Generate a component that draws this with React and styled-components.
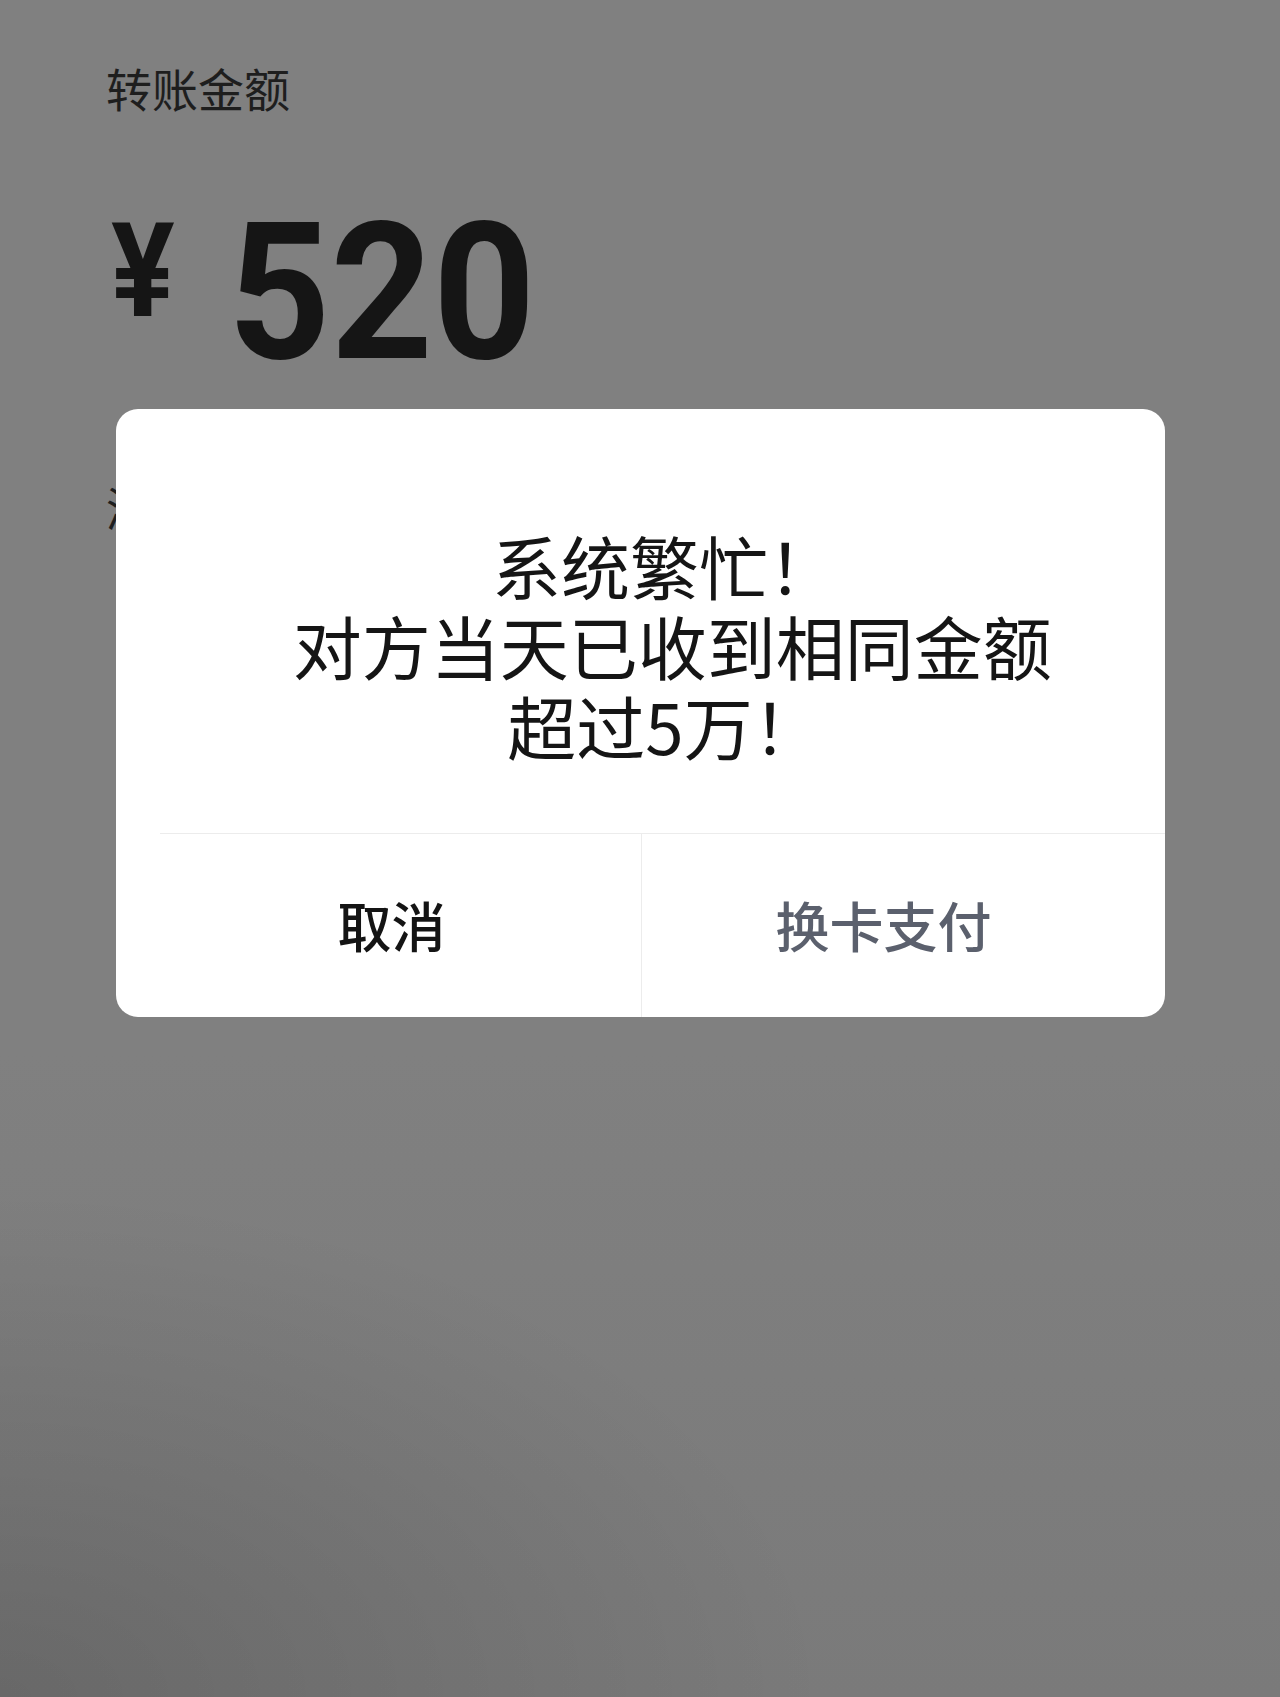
import React from 'react';
import styled, { createGlobalStyle } from 'styled-components';

const GlobalStyle = createGlobalStyle`
  html, body {
    margin: 0;
    padding: 0;
  }
  body {
    font-family: "Noto Sans CJK SC", "Noto Sans", sans-serif;
  }
`

const App = () => {
  return (
    <Page>
      <GlobalStyle />
      <Content>
        <Label>转账金额</Label>
        <AmountRow>
          <Yen>¥</Yen>
          <Digits>520</Digits>
        </AmountRow>
        <Note>添加转账说明</Note>
      </Content>

      <Dialog>
        <Message>
          <Line>系统繁忙！</Line>
          <Line> 对方当天已收到相同金额</Line>
          <Line>超过5万！</Line>
        </Message>
        <Divider />
        <Actions>
          <ActionButton side="left">取消</ActionButton>
          <ActionButton side="right" muted>换卡支付</ActionButton>
        </Actions>
      </Dialog>
    </Page>
  )
}

const Page = styled.div`
  position: relative;
  width: 1280px;
  height: 1697px;
  overflow: hidden;
  background:
    radial-gradient(ellipse 65% 30% at 0% 100%, rgba(0, 0, 0, 0.15), rgba(0, 0, 0, 0)),
    linear-gradient(180deg, #808080 0%, #808080 62%, #7a7a7a 100%);
`
const Content = styled.div`
  padding: 57px 0 0 106px;
  display: flex;
  flex-direction: column;
`
const Label = styled.div`
  font-size: 46px;
  line-height: 60px;
  color: #1e1e1e;
  font-weight: 400;
`
const AmountRow = styled.div`
  display: flex;
  align-items: flex-start;
  margin-top: 67px;
  height: 200px;
  font-family: Roboto, "Liberation Sans", sans-serif;
  font-weight: 700;
  color: #151515;
`
const Yen = styled.span`
  font-size: 132px;
  line-height: 132px;
  margin-top: 21px;
  margin-left: 5px;
  transform: scaleX(0.9);
  transform-origin: left top;
  width: 70px;
`
const Digits = styled.span`
  font-size: 192px;
  line-height: 192px;
  margin-left: 47px;
  margin-top: 13px;
  display: inline-block;
  transform: scaleX(0.93);
  transform-origin: left top;
`
const Note = styled.div`
  margin-top: 92px;
  font-size: 46px;
  line-height: 60px;
  color: #1e1e1e;
`
const Dialog = styled.div`
  position: absolute;
  left: 116px;
  top: 409px;
  width: 1049px;
  height: 608px;
  background: #ffffff;
  border-radius: 22px;
  display: flex;
  flex-direction: column;
  overflow: hidden;
`
const Message = styled.div`
  box-sizing: border-box;
  height: 424px;
  padding: 116px 0 0 48px;
  display: flex;
  flex-direction: column;
  align-items: center;
  color: #151515;
  font-size: 69px;
  line-height: 80px;
  font-weight: 400;
  white-space: pre;
`
const Line = styled.div`
  text-align: center;
`
const Divider = styled.div`
  height: 1px;
  margin-left: 44px;
  background: #ececec;
`
const Actions = styled.div`
  flex: 1;
  display: grid;
  grid-template-columns: 525px 1fr;
`
const ActionButton = styled.div`
  display: flex;
  align-items: center;
  justify-content: center;
  font-size: 54px;
  font-weight: 500;
  color: ${p => (p.muted ? '#5b606d' : '#141414')};
  padding-left: ${p => (p.side === 'left' ? '26px' : '0')};
  padding-right: ${p => (p.side === 'right' ? '40px' : '0')};
  border-left: ${p => (p.side === 'right' ? '1.5px solid #ececec' : 'none')};
  padding-bottom: 2px;
`

export default App
